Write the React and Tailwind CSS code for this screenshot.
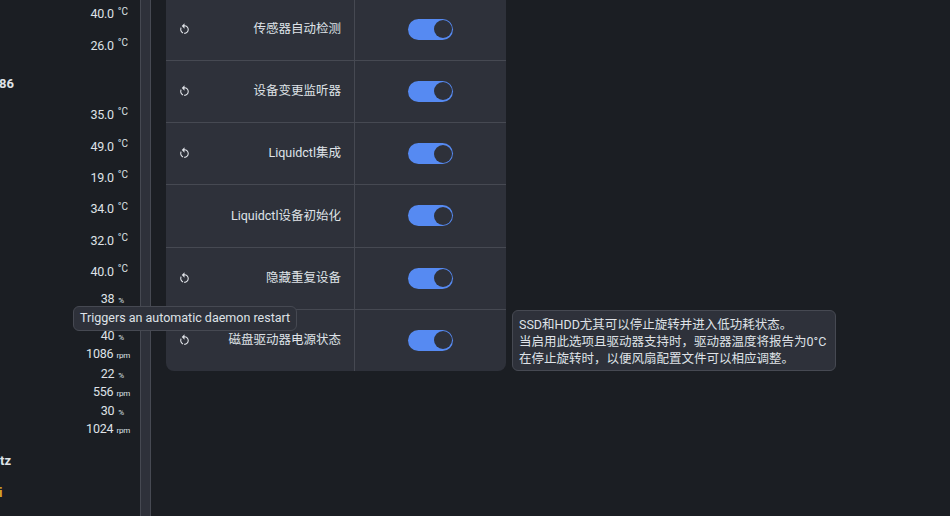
function Restart() {
  return (
    <svg viewBox="0 0 24 24" className="w-[13px] h-[13px] fill-[#dfe2e7]">
      <path d="M12,4C14.1,4 16.1,4.8 17.6,6.3C20.7,9.4 20.7,14.5 17.6,17.6C15.8,19.5 13.3,20.2 10.9,19.9L11.4,17.9C13.1,18.1 14.9,17.5 16.2,16.2C18.5,13.9 18.5,10.1 16.2,7.7C15.1,6.6 13.5,6 12,6V10.6L7,5.6L12,0.6V4M6.3,17.6C3.7,15 3.3,11 5.1,7.9L6.6,9.4C5.5,11.6 5.9,14.4 7.8,16.2C8.3,16.7 8.9,17.1 9.6,17.4L9,19.4C8,19 7.1,18.4 6.3,17.6Z" />
    </svg>
  );
}
function Toggle() {
  return (
    <div className="w-[45px] h-[21px] rounded-full bg-[#568af2] flex items-center justify-end pr-[1.5px]">
      <div className="w-[18px] h-[18px] rounded-full bg-[#2e313a]" />
    </div>
  );
}
function Row({ label, icon = true, last }) {
  return (
    <div className={`flex ${last ? "h-[61.25px]" : "h-[62.25px] border-b border-[#464952]"}`}>
      <div className="w-[189px] border-r border-[#464952] flex items-center pl-[12px] pr-[13px]">
        <div className="w-[14px] shrink-0">{icon && <Restart />}</div>
        <div className="flex-1 text-right text-[12.5px] text-[#dfe2e7] whitespace-nowrap">{label}</div>
      </div>
      <div className="flex-1 flex items-center justify-center"><Toggle /></div>
    </div>
  );
}
function Temp({ v }) {
  return (
    <div className="h-[31.4px] flex justify-end items-center pr-[12px] text-[12.5px] tracking-[-0.3px] leading-none text-[#dfe2e7] whitespace-nowrap">
      {v}<span className="ml-[4px] text-[10px] tracking-normal relative -top-[3px]">°C</span>
    </div>
  );
}
function Fan({ pct, rpm }) {
  return (
    <div className="h-[37.5px] text-[12.5px] tracking-[-0.2px] text-[#dfe2e7] flex flex-col items-end pr-[10px] leading-[16px]">
      <div className="pr-[6px] whitespace-nowrap">{pct}<span className="ml-[4px] text-[8px]">%</span></div>
      {rpm && <div className="whitespace-nowrap">{rpm}<span className="ml-[3px] text-[8px]">rpm</span></div>}
    </div>
  );
}
export default function App() {
  return (
    <div className="relative w-[950px] h-[516px] overflow-hidden flex bg-[#1b1e23]" style={{ fontFamily: 'Roboto, "Noto Sans CJK SC", sans-serif' }}>
      <div className="w-[140px] shrink-0 -mt-[1px]">
        <Temp v="40.0" />
        <Temp v="26.0" />
        <div className="h-[38px] pt-[13px] text-[13px] font-bold text-[#dfe2e7] leading-[18px] -ml-[1px]">86</div>
        <Temp v="35.0" />
        <Temp v="49.0" />
        <Temp v="19.0" />
        <Temp v="34.0" />
        <Temp v="32.0" />
        <Temp v="40.0" />
        <div className="h-[2.5px]" />
        <Fan pct="38" />
        <Fan pct="40" rpm="1086" />
        <Fan pct="22" rpm="556" />
        <Fan pct="30" rpm="1024" />
        <div className="h-[31px] pt-[11.5px] text-[13px] font-bold text-[#dfe2e7] leading-[18px]">tz</div>
        <div className="mt-[12px] text-[13px] font-bold text-[#e0a526] leading-[18px] -ml-[1px]">i</div>
      </div>
      <div className="w-[11px] shrink-0 bg-[#2e313a] border-x border-[#464952]" />
      <div className="pl-[15px] flex-1">
        <div className="w-[340px] -mt-[1.5px] bg-[#2e313a] rounded-b-lg">
          <Row label="传感器自动检测" />
          <Row label="设备变更监听器" />
          <Row label="Liquidctl集成" />
          <Row label="Liquidctl设备初始化" icon={false} />
          <Row label="隐藏重复设备" />
          <Row label="磁盘驱动器电源状态" last />
        </div>
      </div>
      <div className="absolute left-[73px] top-[306px] h-[25px] px-[6px] flex items-center rounded-md bg-[#2e313a] border border-[#464952] text-[12.5px] text-[#dfe2e7] whitespace-nowrap">
        Triggers an automatic daemon restart
      </div>
      <div className="absolute left-[512px] top-[310px] w-[324px] h-[61px] px-[6px] py-[5px] rounded-md bg-[#2e313a] border border-[#464952] text-[12.5px] leading-[17px] text-[#dfe2e7] whitespace-nowrap">
        <div>SSD和HDD尤其可以停止旋转并进入低功耗状态。</div>
        <div>当启用此选项且驱动器支持时，驱动器温度将报告为0°C</div>
        <div>在停止旋转时，以便风扇配置文件可以相应调整。</div>
      </div>
    </div>
  );
}
